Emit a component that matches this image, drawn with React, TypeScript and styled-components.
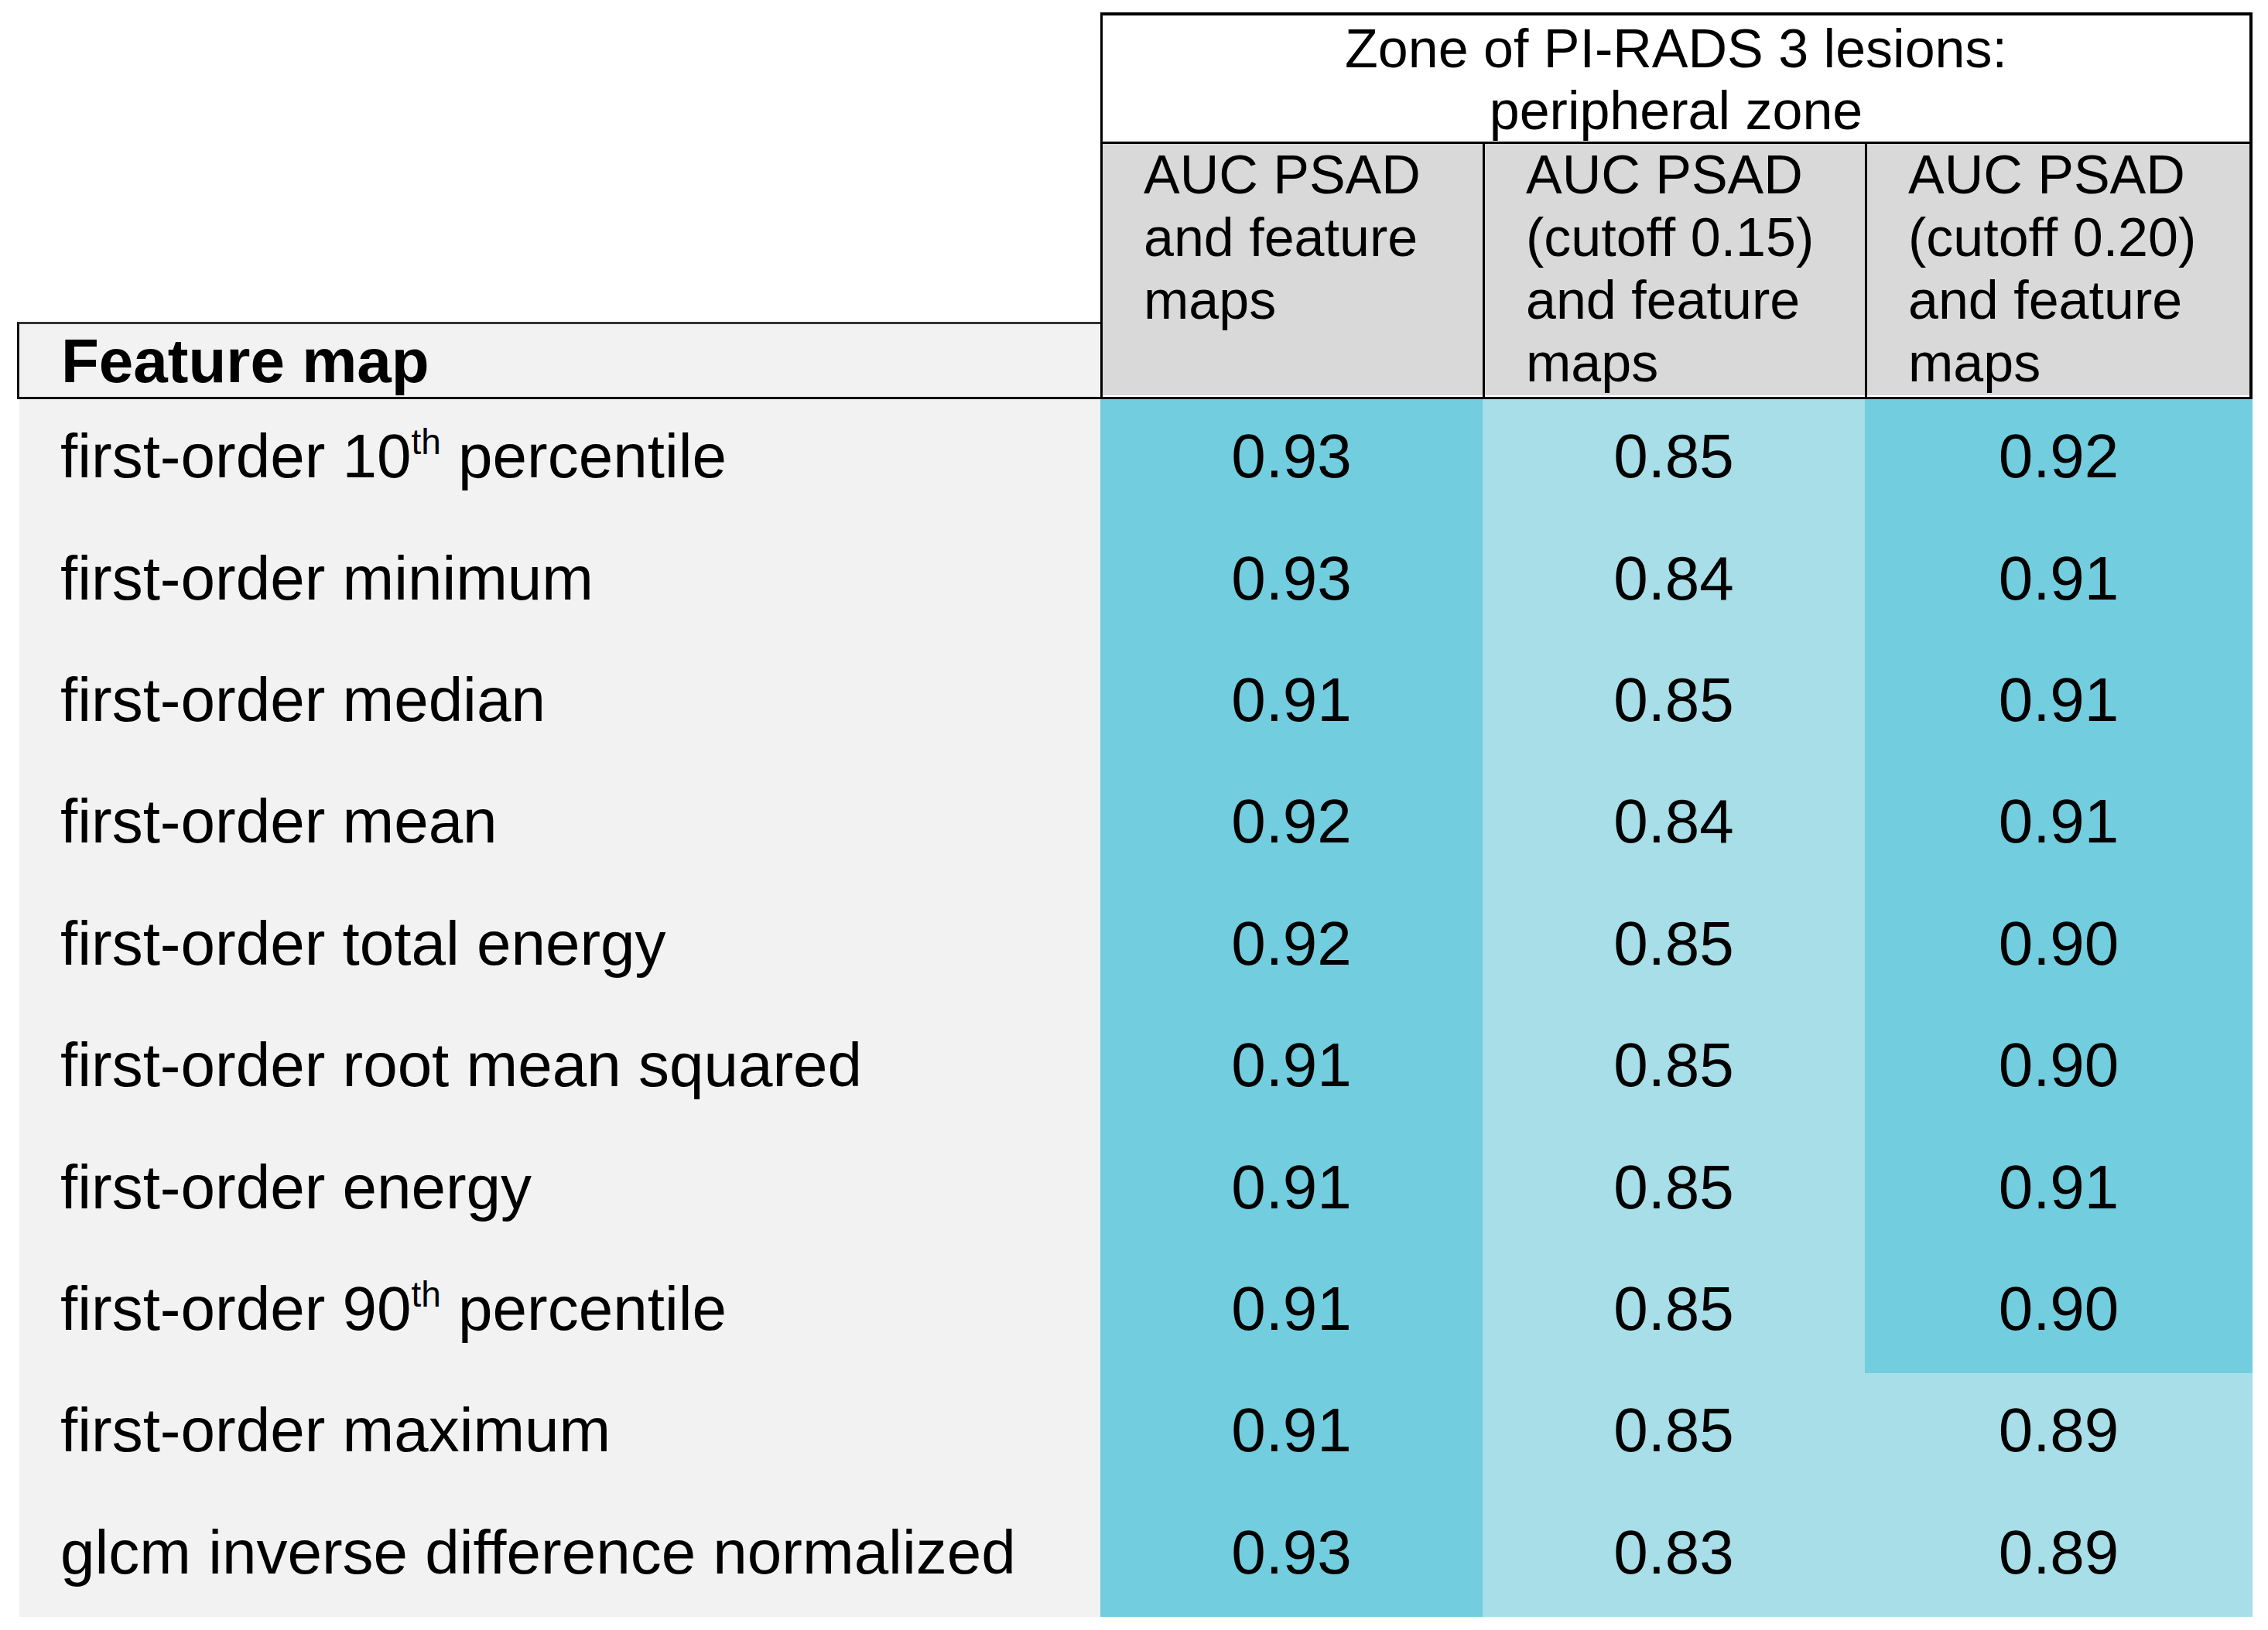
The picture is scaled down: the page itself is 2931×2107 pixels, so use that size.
import React from "react";
import styled, { createGlobalStyle } from "styled-components";

const GlobalStyle = createGlobalStyle`
  html, body {
    margin: 0;
    padding: 0;
    background: #ffffff;
  }
  body {
    font-family: "Liberation Sans", Arial, sans-serif;
    color: #000;
  }
`;

const Sup = styled.span`
  font-size: 46px;
  line-height: 0;
  vertical-align: 30px;
`;

type Row = {
  label: React.ReactNode;
  values: [string, string, string];
  lastDark: boolean;
};

const rows: Row[] = [
  { label: <>first-order 10<Sup>th</Sup> percentile</>, values: ["0.93", "0.85", "0.92"], lastDark: true },
  { label: "first-order minimum", values: ["0.93", "0.84", "0.91"], lastDark: true },
  { label: "first-order median", values: ["0.91", "0.85", "0.91"], lastDark: true },
  { label: "first-order mean", values: ["0.92", "0.84", "0.91"], lastDark: true },
  { label: "first-order total energy", values: ["0.92", "0.85", "0.90"], lastDark: true },
  { label: "first-order root mean squared", values: ["0.91", "0.85", "0.90"], lastDark: true },
  { label: "first-order energy", values: ["0.91", "0.85", "0.91"], lastDark: true },
  { label: <>first-order 90<Sup>th</Sup> percentile</>, values: ["0.91", "0.85", "0.90"], lastDark: true },
  { label: "first-order maximum", values: ["0.91", "0.85", "0.89"], lastDark: false },
  { label: "glcm inverse difference normalized", values: ["0.93", "0.83", "0.89"], lastDark: false },
];

const headers = [
  ["AUC PSAD", "and feature", "maps"],
  ["AUC PSAD", "(cutoff 0.15)", "and feature", "maps"],
  ["AUC PSAD", "(cutoff 0.20)", "and feature", "maps"],
];

const App = () => {
  return (
    <Page>
      <GlobalStyle />
      <Table>
        <Spacer />
        <ZoneHead>
          Zone of PI-RADS 3 lesions:
          <br />
          peripheral zone
        </ZoneHead>

        <Corner>
          <FeatureHead>Feature map</FeatureHead>
        </Corner>
        {headers.map((lines, i) => (
          <ColHead key={i} $last={i === headers.length - 1}>
            {lines.map((l) => (
              <div key={l}>{l}</div>
            ))}
          </ColHead>
        ))}

        {rows.map((r, i) => (
          <React.Fragment key={i}>
            <Label>
              <span>{r.label}</span>
            </Label>
            <Value $tone="dark">{r.values[0]}</Value>
            <Value $tone="light">{r.values[1]}</Value>
            <Value $tone={r.lastDark ? "dark" : "light"}>{r.values[2]}</Value>
          </React.Fragment>
        ))}
      </Table>
    </Page>
  );
};
export default App;

const Page = styled.div`
  padding: 16px 0 0 22px;
`;

const Table = styled.div`
  display: grid;
  grid-template-columns: 1400px 494px 494px 501px;
  grid-template-rows: 170px 330px repeat(10, 157.4px);
`;

const Spacer = styled.div``;

const ZoneHead = styled.div`
  grid-column: 2 / 5;
  box-sizing: border-box;
  border: 3px solid #000;
  border-top-width: 4px;
  border-right-width: 4px;
  padding-top: 3px;
  text-align: center;
  font-size: 70px;
  line-height: 80px;
  background: #fff;
`;

const Corner = styled.div`
  display: flex;
  align-items: flex-end;
`;

const FeatureHead = styled.div`
  flex: 1;
  box-sizing: border-box;
  height: 100px;
  border: 3px solid #111;
  border-right: none;
  border-top-color: #333;
  background: #f2f2f2;
  padding: 2px 0 0 54px;
  font-size: 80px;
  font-weight: bold;
  line-height: 91px;
`;

const ColHead = styled.div<{ $last: boolean }>`
  box-sizing: border-box;
  background: #d9d9d9;
  border-left: 3px solid #000;
  border-right: ${(p) => (p.$last ? "4px solid #000" : "none")};
  border-bottom: 3px solid #000;
  box-shadow: inset 0 -2px 0 #fff;
  padding: 0 0 0 53px;
  font-size: 70px;
  line-height: 81px;
`;

const Label = styled.div`
  display: flex;
  align-items: center;
  box-sizing: border-box;
  border-left: 3px solid #fff;
  background: #f2f2f2;
  padding: 0 0 9px 53px;
  font-size: 80px;
  line-height: 92px;
  white-space: nowrap;
`;

const Value = styled.div<{ $tone: "dark" | "light" }>`
  display: flex;
  align-items: center;
  justify-content: center;
  box-sizing: border-box;
  padding-bottom: 9px;
  background: ${(p) => (p.$tone === "dark" ? "#72cdde" : "#a7dee8")};
  font-size: 80px;
  line-height: 92px;
`;
